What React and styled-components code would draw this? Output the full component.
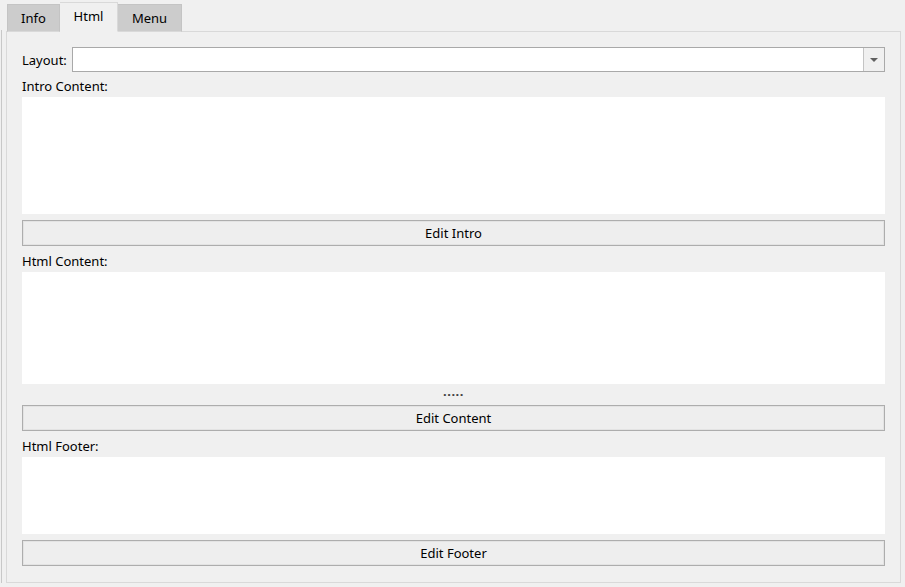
import React from "react";
import styled, { createGlobalStyle } from "styled-components";

const GlobalStyle = createGlobalStyle`
  html, body {
    margin: 0;
    padding: 0;
    background: #f0f0f0;
  }
  body {
    font-family: "Noto Sans", "Open Sans", sans-serif;
    font-size: 13px;
    color: #000;
  }
`;

const tabs = [
  { name: "Info", width: 53 },
  { name: "Html", width: 58 },
  { name: "Menu", width: 64 },
];

const sections = [
  { id: "intro", label: "Intro Content:", height: 117, button: "Edit Intro" },
  { id: "content", label: "Html Content:", height: 112, button: "Edit Content", dots: true },
  { id: "footer", label: "Html Footer:", height: 77, button: "Edit Footer" },
];

const App = () => {
  return (
    <Wrapper>
      <GlobalStyle />
      <TabStrip>
        {tabs.map((tab) => (
          <Tab key={tab.name} active={tab.name === "Html"} w={tab.width}>
            {tab.name}
          </Tab>
        ))}
      </TabStrip>
      <Panel>
        <LayoutRow>
          <Label>Layout:</Label>
          <Select>
            <SelectValue />
            <DropButton>
              <Arrow />
            </DropButton>
          </Select>
        </LayoutRow>

        {sections.map((section, i) => (
          <Section key={section.id}>
            <SectionLabel first={i === 0}>{section.label}</SectionLabel>
            <Editor style={{ height: section.height }} />
            {section.dots ? <Dots>.....</Dots> : <Spacer />}
            <Button>{section.button}</Button>
          </Section>
        ))}
      </Panel>
    </Wrapper>
  );
};

const Wrapper = styled.div`
  width: 905px;
  height: 587px;
  box-sizing: border-box;
  padding: 1px 4px 0 6px;
  position: relative;
  &::before {
    content: "";
    position: absolute;
    left: 1px;
    top: 30px;
    bottom: 4px;
    width: 1px;
    background: #c8c8c8;
  }
`;

const TabStrip = styled.div`
  display: flex;
  align-items: flex-end;
  height: 30px;
  padding-left: 1px;
  position: relative;
  z-index: 1;
`;

const Tab = styled.div`
  box-sizing: border-box;
  width: ${(p) => p.w}px;
  height: ${(p) => (p.active ? "30px" : "28px")};
  display: flex;
  align-items: center;
  justify-content: center;
  background: ${(p) => (p.active ? "#f0f0f0" : "#cccccc")};
  border: 1px solid ${(p) => (p.active ? "#d9d9d9" : "#c4c4c4")};
  border-bottom: ${(p) => (p.active ? "1px solid #f0f0f0" : "1px solid #d9d9d9")};
  margin-bottom: -1px;
  padding-bottom: ${(p) => (p.active ? "2px" : "0")};
  color: #000;
  & + & {
    border-left: ${(p) => (p.active ? "1px solid #d9d9d9" : "none")};
  }
`;

const Panel = styled.div`
  box-sizing: border-box;
  height: 552px;
  border: 1px solid #d9d9d9;
  padding: 15px 15px 0 15px;
  display: flex;
  flex-direction: column;
`;

const LayoutRow = styled.div`
  display: flex;
  align-items: center;
  height: 25px;
`;

const Label = styled.span`
  margin-right: 5px;
  line-height: 16px;
`;

const Select = styled.div`
  flex: 1;
  height: 25px;
  box-sizing: border-box;
  display: flex;
  border: 1px solid #a9a9a9;
  background: #fff;
`;

const SelectValue = styled.div`
  flex: 1;
`;

const DropButton = styled.div`
  width: 20px;
  border-left: 1px solid #c4c4c4;
  background: #f0f0f0;
  display: flex;
  align-items: center;
  justify-content: center;
`;

const Arrow = styled.div`
  width: 0;
  height: 0;
  border-left: 4px solid transparent;
  border-right: 4px solid transparent;
  border-top: 4px solid #606060;
`;

const Section = styled.div`
  display: flex;
  flex-direction: column;
`;

const SectionLabel = styled.div`
  line-height: 16px;
  padding: ${(p) => (p.first ? "6px" : "7px")} 0 3px 0;
`;

const Editor = styled.div`
  background: #fff;
`;

const Spacer = styled.div`
  height: 6px;
`;

const Dots = styled.div`
  height: 21px;
  line-height: 14px;
  text-align: center;
  color: #404040;
  font-weight: bold;
  letter-spacing: 0.5px;
`;

const Button = styled.button`
  height: 26px;
  box-sizing: border-box;
  border: 1px solid #adadad;
  box-shadow: inset 0 0 0 1px #e3e3e3;
  background: #eeeeee;
  font-family: inherit;
  font-size: 13px;
  color: #000;
  padding: 0;
`;

export default App;
